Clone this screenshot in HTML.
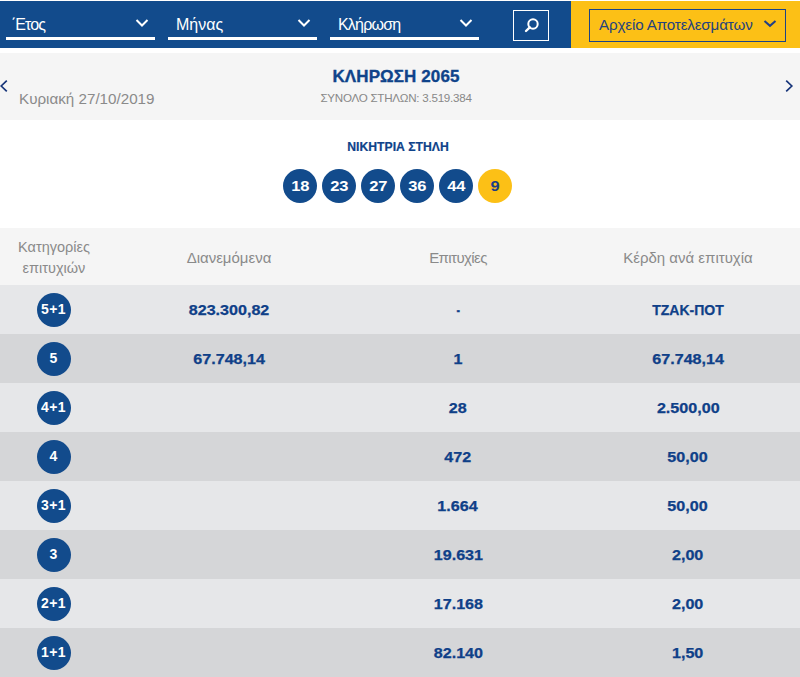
<!DOCTYPE html>
<html><head><meta charset="utf-8">
<style>
*{margin:0;padding:0;box-sizing:border-box}
html,body{width:800px;height:677px;overflow:hidden;background:#fff;font-family:"Liberation Sans",sans-serif}
.abs{position:absolute}
#top{position:absolute;left:0;top:1px;width:800px;height:47px}
#blue{position:absolute;left:0;top:0;width:571px;height:47px;background:#124b8c}
#yellow{position:absolute;left:571px;top:0;width:229px;height:47px;background:#fcc016}
.dd{position:absolute;top:0;height:47px;width:149px}
.dd .lbl{position:absolute;left:8px;top:15px;color:#fff;font-size:16px;line-height:18px;white-space:nowrap}
.dd .ul{position:absolute;left:0;top:36px;width:149px;height:3px;background:#fff}
.dd svg{position:absolute;left:129px;top:17px}
#search{position:absolute;left:513px;top:9px;width:36px;height:31px;border:1px solid #fff}
#search svg{position:absolute;left:10px;top:6px}
#arch{position:absolute;left:589px;top:8px;width:197px;height:33px;border:1px solid #1d4486}
#arch .lbl{position:absolute;left:9px;top:5.5px;color:#26437e;font-size:15.2px;line-height:18px;white-space:nowrap;letter-spacing:-0.15px}
#arch svg{position:absolute;left:173px;top:8.5px}
#draw{position:absolute;left:0;top:53px;width:800px;height:67px;background:#f5f5f5}
#date{position:absolute;left:19px;top:37px;color:#8a8a8a;font-size:15.2px;line-height:17px;white-space:nowrap}
#dtitle{position:absolute;left:0;top:14px;width:792px;text-align:center;color:#0f438a;font-size:17px;font-weight:bold;line-height:20px;letter-spacing:0.1px;-webkit-text-stroke:0.35px #0f438a}
#dsub{position:absolute;left:0;top:38px;width:792px;text-align:center;color:#888;font-size:11.6px;line-height:14px;letter-spacing:-0.25px}
#win{position:absolute;left:0;top:140px;width:796px;text-align:center;color:#0f438a;font-size:12.2px;font-weight:bold;line-height:14px;-webkit-text-stroke:0.2px #0f438a}
.ball{position:absolute;top:169px;width:34px;height:34px;border-radius:50%;background:#124b8c;color:#fff;font-weight:bold;font-size:15px;line-height:34px;text-align:center}
.ball.y{background:#fcc016;color:#1a3d85}
.ball span{display:inline-block;transform:scaleX(1.1)}
#thead{position:absolute;left:0;top:228px;width:800px;height:57px;background:#f5f5f5}
.th{position:absolute;width:240px;text-align:center;color:#8a8a8a;font-size:15px;line-height:21px}
.row{position:absolute;left:0;width:800px;height:49px}
.row.a{background:#e6e7e9}
.row.b{background:#d5d6d8}
.cat{position:absolute;left:37px;top:7.5px;width:34px;height:34px;border-radius:50%;background:#124b8c;color:#fff;font-weight:bold;font-size:14px;line-height:33px;text-align:center;letter-spacing:0.4px;padding-right:1px}
.td{position:absolute;top:0;width:240px;text-align:center;color:#0f4088;font-size:14px;font-weight:bold;line-height:50px;-webkit-text-stroke:0.25px #0f4088}
.td span{display:inline-block;transform:scaleX(1.15)}
.c2{left:109px}.c3{left:338px}.c4{left:568px}
</style></head><body>
<div id="top">
 <div id="blue">
  <div class="dd" style="left:6px"><div class="lbl" style="left:5px;letter-spacing:-0.9px"><span style="letter-spacing:0;margin-right:-1px">΄</span>Ετος</div><div class="ul"></div>
   <svg width="14" height="10" viewBox="0 0 14 10"><path d="M1.5 2 L7 7.5 L12.5 2" fill="none" stroke="#fff" stroke-width="2"/></svg></div>
  <div class="dd" style="left:168px"><div class="lbl">Μήνας</div><div class="ul"></div>
   <svg width="14" height="10" viewBox="0 0 14 10"><path d="M1.5 2 L7 7.5 L12.5 2" fill="none" stroke="#fff" stroke-width="2"/></svg></div>
  <div class="dd" style="left:330px"><div class="lbl" style="letter-spacing:-0.8px">Κλήρωση</div><div class="ul"></div>
   <svg width="14" height="10" viewBox="0 0 14 10"><path d="M1.5 2 L7 7.5 L12.5 2" fill="none" stroke="#fff" stroke-width="2"/></svg></div>
  <div id="search"><svg width="16" height="16" viewBox="0 0 16 16"><circle cx="9" cy="7" r="4.7" fill="none" stroke="#fff" stroke-width="2"/><path d="M5.8 10.3 L2 14" stroke="#fff" stroke-width="2.4" stroke-linecap="round"/></svg></div>
 </div>
 <div id="yellow"></div>
 <div id="arch"><div class="lbl">Αρχείο Αποτελεσμάτων</div>
  <svg width="14" height="10" viewBox="0 0 14 10"><path d="M1.5 2 L7 6.8 L12.5 2" fill="none" stroke="#213f86" stroke-width="2"/></svg></div>
</div>
<div id="draw">
 <svg class="abs" style="left:-2.5px;top:26px" width="10" height="14" viewBox="0 0 10 14"><path d="M8.8 1.6 L3.2 7 L8.8 12.4" fill="none" stroke="#17357a" stroke-width="1.7"/></svg>
 <div id="date">Κυριακή 27/10/2019</div>
 <div id="dtitle">ΚΛΗΡΩΣΗ 2065</div>
 <div id="dsub">ΣΥΝΟΛΟ ΣΤΗΛΩΝ: 3.519.384</div>
 <svg class="abs" style="left:785px;top:26px" width="10" height="14" viewBox="0 0 10 14"><path d="M1.2 1.6 L6.8 7 L1.2 12.4" fill="none" stroke="#17357a" stroke-width="1.7"/></svg>
</div>
<div id="win">ΝΙΚΗΤΡΙΑ ΣΤΗΛΗ</div>
<div class="ball" style="left:283px"><span>18</span></div>
<div class="ball" style="left:322px"><span>23</span></div>
<div class="ball" style="left:361px"><span>27</span></div>
<div class="ball" style="left:400px"><span>36</span></div>
<div class="ball" style="left:439px"><span>44</span></div>
<div class="ball y" style="left:478px"><span>9</span></div>
<div id="thead">
 <div class="th" style="left:-66px;top:9px;font-size:14.5px;line-height:20.5px">Κατηγορίες<br>επιτυχιών</div>
 <div class="th c2" style="top:19px">Διανεμόμενα</div>
 <div class="th c3" style="top:19px;letter-spacing:-0.6px">Επιτυχίες</div>
 <div class="th c4" style="top:19px">Κέρδη ανά επιτυχία</div>
</div>
<div class="row a" style="top:285px"><div class="cat">5+1</div><div class="td c2"><span>823.300,82</span></div><div class="td c3"><span style="transform:scaleX(0.75)">-</span></div><div class="td c4">ΤΖΑΚ-ΠΟΤ</div></div>
<div class="row b" style="top:334px"><div class="cat">5</div><div class="td c2"><span>67.748,14</span></div><div class="td c3"><span>1</span></div><div class="td c4"><span>67.748,14</span></div></div>
<div class="row a" style="top:383px"><div class="cat">4+1</div><div class="td c3"><span>28</span></div><div class="td c4"><span>2.500,00</span></div></div>
<div class="row b" style="top:432px"><div class="cat">4</div><div class="td c3"><span>472</span></div><div class="td c4"><span>50,00</span></div></div>
<div class="row a" style="top:481px"><div class="cat">3+1</div><div class="td c3"><span>1.664</span></div><div class="td c4"><span>50,00</span></div></div>
<div class="row b" style="top:530px"><div class="cat">3</div><div class="td c3"><span>19.631</span></div><div class="td c4"><span>2,00</span></div></div>
<div class="row a" style="top:579px"><div class="cat">2+1</div><div class="td c3"><span>17.168</span></div><div class="td c4"><span>2,00</span></div></div>
<div class="row b" style="top:628px"><div class="cat">1+1</div><div class="td c3"><span>82.140</span></div><div class="td c4"><span>1,50</span></div></div>
</body></html>
